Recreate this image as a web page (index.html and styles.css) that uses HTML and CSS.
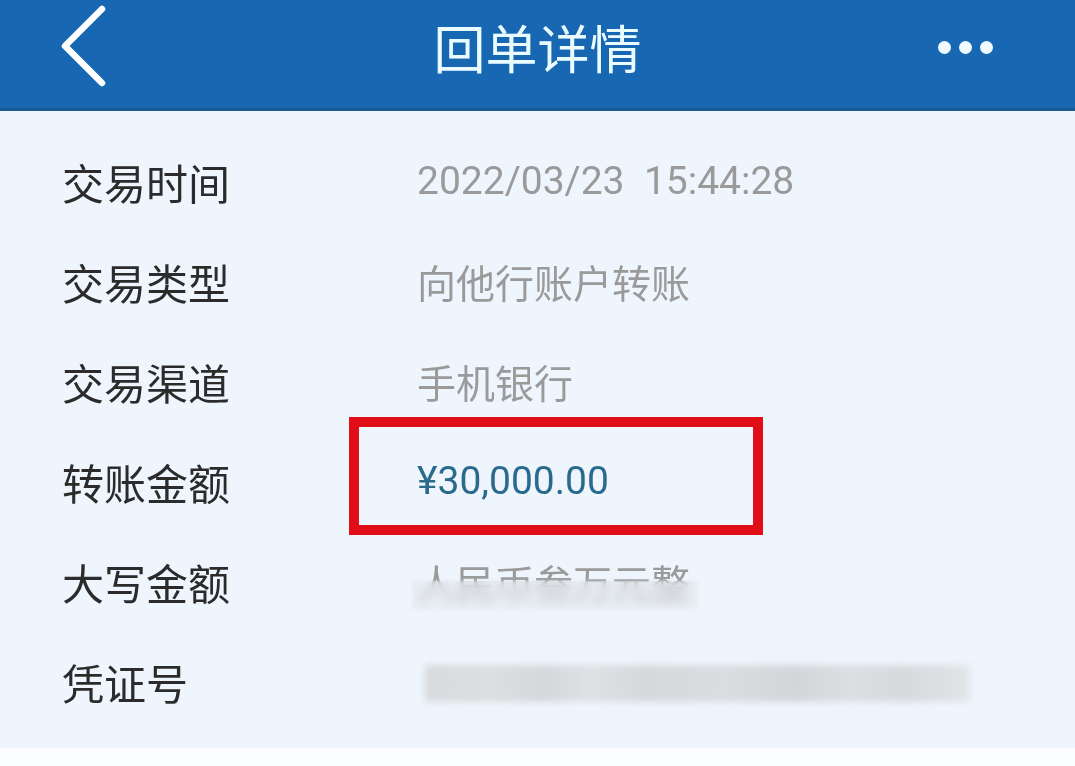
FILE: index.html
```html
<!DOCTYPE html>
<html>
<head>
    <title>回单详情</title>
    <link rel="stylesheet" href="styles.css">
</head>
<body>
    <div class="topbar">
        <svg class="back" width="48" height="80" viewBox="0 0 48 80">
            <path d="M42 6 L5 43 L42 80" fill="none" stroke="#fff" stroke-width="6.5" stroke-linecap="round" stroke-linejoin="round"/>
        </svg>
        <h1>回单详情</h1>
        <div class="more"><span></span><span></span><span></span></div>
    </div>
    <div class="detail">
        <div class="row">
            <div class="label">交易时间</div>
            <div class="value num">2022/03/23&nbsp;&nbsp;15:44:28</div>
        </div>
        <div class="row">
            <div class="label">交易类型</div>
            <div class="value">向他行账户转账</div>
        </div>
        <div class="row">
            <div class="label">交易渠道</div>
            <div class="value">手机银行</div>
        </div>
        <div class="row">
            <div class="label">转账金额</div>
            <div class="value num amount">¥30,000.00<span class="mark"></span></div>
        </div>
        <div class="row">
            <div class="label">大写金额</div>
            <div class="value masked">人民币叁万元整<span class="smudge"></span></div>
        </div>
        <div class="row">
            <div class="label">凭证号</div>
            <div class="value"><div class="blur-bar"></div></div>
        </div>
    </div>
    <div class="footer"></div>
</body>
</html>
```

FILE: styles.css
```css
body {
    margin: 0;
    font-family: "Noto Sans CJK SC", Roboto, sans-serif;
    background-color: #eef5fc;
}
.topbar {
    height: 108px;
    background-color: #1767b3;
    border-bottom: 3px solid #1b5c90;
    display: flex;
    align-items: center;
    justify-content: space-between;
    padding: 0 82px 0 60px;
    position: relative;
}
.back {
    margin-top: -22px;
    overflow: visible;
}
.topbar h1 {
    position: absolute;
    left: 0;
    right: 0;
    top: 0;
    margin: 0;
    text-align: center;
    line-height: 94px;
    font-size: 52px;
    font-weight: 400;
    color: #eafcff;
}
.more {
    display: flex;
    gap: 8px;
    margin-top: -14px;
}
.more span {
    width: 13px;
    height: 13px;
    border-radius: 50%;
    background: #f2fbff;
}
.detail {
    padding: 20px 0 17px 62px;
}
.row {
    display: flex;
    align-items: center;
    height: 100px;
}
.label {
    width: 355px;
    font-size: 42px;
    color: #2b2b2b;
}
.value {
    font-size: 39px;
    color: #9a9a9a;
    position: relative;
}
.num {
    font-family: Roboto, sans-serif;
}
.amount {
    color: #2a6a8c;
}
.mark {
    position: absolute;
    left: -68px;
    top: -41px;
    width: 394px;
    height: 98px;
    border: 10px solid #e10e17;
}
.masked .smudge {
    position: absolute;
    left: -4px;
    top: 28px;
    width: 285px;
    height: 28px;
    backdrop-filter: blur(5px);
    background: rgba(226, 230, 234, 0.55);
    filter: blur(2px);
}
.blur-bar {
    width: 545px;
    height: 37px;
    margin-left: 8px;
    margin-top: 4px;
    background: linear-gradient(90deg, #d8dadd 0, #dcdee0 12%, #d5d8db 22%, #dfe2e5 30%, #d6d9dc 40%, #dadde0 55%, #d3d6d9 68%, #dcdfe2 78%, #d7dadd 88%, #e2e5e8 100%);
    filter: blur(3px);
}
.footer {
    height: 20px;
    background: #fbfdff;
}
```
